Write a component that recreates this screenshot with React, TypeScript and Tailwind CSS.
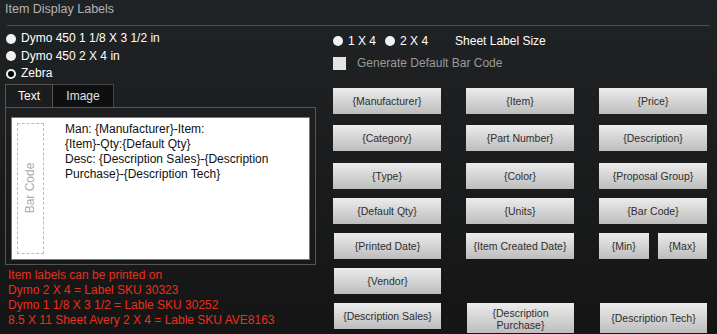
const font = { fontFamily: '"Liberation Sans", Arial, sans-serif' }

function Radio({ checked = false }: { checked?: boolean }) {
  return (
    <span className="flex h-[10px] w-[10px] shrink-0 items-center justify-center rounded-full bg-[#f2f2f2]">
      {checked && <span className="h-[6px] w-[6px] rounded-full bg-black" />}
    </span>
  )
}

function FieldButton({ label, className = '' }: { label: string; className?: string }) {
  return (
    <div
      className={`flex h-[26px] items-center justify-center overflow-hidden bg-gradient-to-b from-[#ececec] to-[#bdbdbd] text-center text-[10.5px] leading-[12px] text-[#2e2e2e] ${className}`}
    >
      {label}
    </div>
  )
}

const labelLines = [
  'Man: {Manufacturer}-Item:',
  '{Item}-Qty:{Default Qty}',
  'Desc: {Description Sales}-{Description Purchase}-{Description Tech}',
]

export default function App() {
  return (
    <div
      className="relative h-[334px] w-[717px] overflow-hidden bg-gradient-to-b from-[#202325] to-[#151515]"
      style={font}
    >
      {/* Title */}
      <div className="pl-[5px] pt-[1px] text-[12.5px] leading-[16px] text-[#b4b4b4]">Item Display Labels</div>
      <div className="mx-[7px] mt-[8px] h-px w-[703px] bg-[#4d4d4d]" />

      <div className="flex">
        {/* Left column */}
        <div className="w-[320px] pl-[5px]">
          <div className="mt-[4px] flex flex-col text-[12px] leading-[17.5px] text-white">
            <div className="flex items-center gap-[5px] pl-[1px]">
              <Radio />
              <span>Dymo 450 1 1/8 X 3 1/2 in</span>
            </div>
            <div className="flex items-center gap-[5px] pl-[1px]">
              <Radio />
              <span>Dymo 450 2 X 4 in</span>
            </div>
            <div className="flex items-center gap-[5px] pl-[1px]">
              <Radio checked />
              <span>Zebra</span>
            </div>
          </div>

          {/* Tabs */}
          <div className="mt-[1px] flex text-[12px]">
            <div className="relative z-10 flex h-[23px] w-[48px] items-center justify-center border border-b-0 border-[#555] bg-[#1b1c1d] text-white">
              Text
            </div>
            <div className="flex h-[23px] w-[61px] items-center justify-center border border-b-0 border-l-0 border-[#454545] bg-[#0e0f10] text-[#e0e0e0]">
              Image
            </div>
          </div>
          <div className="w-[311px] border border-[#555] px-[5px] pb-[4px] pt-[9px]">
            <div className="flex h-[143px] border border-[#777] bg-white p-[5px]">
              <div className="flex w-[27px] items-center justify-center border border-dashed border-[#bbb]">
                <span className="-rotate-90 whitespace-nowrap text-[12px] text-[#aaa]">Bar Code</span>
              </div>
              <div className="ml-[21px] mt-[-1px] w-[225px] text-[12px] leading-[15px] text-[#111]">
                {labelLines.map((line) => (
                  <div key={line}>{line}</div>
                ))}
              </div>
            </div>
          </div>

          <div className="mt-[3px] pl-[3px] text-[12px] leading-[15px] text-[#e8301c]">
            <div>Item labels can be printed on</div>
            <div>Dymo 2 X 4 = Label SKU 30323</div>
            <div>Dymo 1 1/8 X 3 1/2 = Lable SKU 30252</div>
            <div>8.5 X 11 Sheet Avery 2 X 4 = Lable SKU AVE8163</div>
          </div>
        </div>

        {/* Right column */}
        <div className="ml-[13px] flex-1">
          <div className="mt-[8px] flex items-center text-[12px] leading-[14px] text-white">
            <Radio />
            <span className="ml-[5px]">1 X 4</span>
            <span className="ml-[9px]">
              <Radio />
            </span>
            <span className="ml-[5px]">2 X 4</span>
            <span className="ml-[27px]">Sheet Label Size</span>
          </div>
          <div className="mt-[8px] flex items-center text-[12px] leading-[14px] text-[#9a9a9a]">
            <span className="h-[13px] w-[13px] bg-[#e4e4e4]" />
            <span className="ml-[11px]">Generate Default Bar Code</span>
          </div>

          <div className="mt-[18px] grid grid-cols-[108px_108px_108px] gap-x-[25px]">
            <FieldButton label="{Manufacturer}" />
            <FieldButton label="{Item}" />
            <FieldButton label="{Price}" />
          </div>
          <div className="mt-[11px] grid grid-cols-[108px_108px_108px] gap-x-[25px]">
            <FieldButton label="{Category}" />
            <FieldButton label="{Part Number}" />
            <FieldButton label="{Description}" />
          </div>
          <div className="mt-[12px] grid grid-cols-[108px_108px_108px] gap-x-[25px]">
            <FieldButton label="{Type}" />
            <FieldButton label="{Color}" />
            <FieldButton label="{Proposal Group}" />
          </div>
          <div className="mt-[9px] grid grid-cols-[108px_108px_108px] gap-x-[25px]">
            <FieldButton label="{Default Qty}" />
            <FieldButton label="{Units}" />
            <FieldButton label="{Bar Code}" />
          </div>
          <div className="mt-[9px] grid grid-cols-[108px_108px_108px] gap-x-[25px]">
            <FieldButton label="{Printed Date}" className="ml-px" />
            <FieldButton label="{Item Created Date}" />
            <div className="flex gap-[9px]">
              <FieldButton label="{Min}" className="w-[50px]" />
              <FieldButton label="{Max}" className="w-[50px]" />
            </div>
          </div>
          <div className="mt-[9px] grid grid-cols-[108px_108px_108px] gap-x-[25px]">
            <FieldButton label="{Vendor}" className="ml-px" />
          </div>
          <div className="mt-[9px] grid grid-cols-[108px_108px_108px] gap-x-[25px]">
            <FieldButton label="{Description Sales}" className="ml-px" />
            <div className="ml-px flex h-[30px] justify-center overflow-hidden bg-gradient-to-b from-[#ececec] to-[#bdbdbd] px-[14px] pt-[4px] text-center text-[10.5px] leading-[12px] text-[#2e2e2e]">
              {'{Description Purchase}'}
            </div>
            <FieldButton label="{Description Tech}" className="ml-px h-[30px]" />
          </div>
        </div>
      </div>
    </div>
  )
}
